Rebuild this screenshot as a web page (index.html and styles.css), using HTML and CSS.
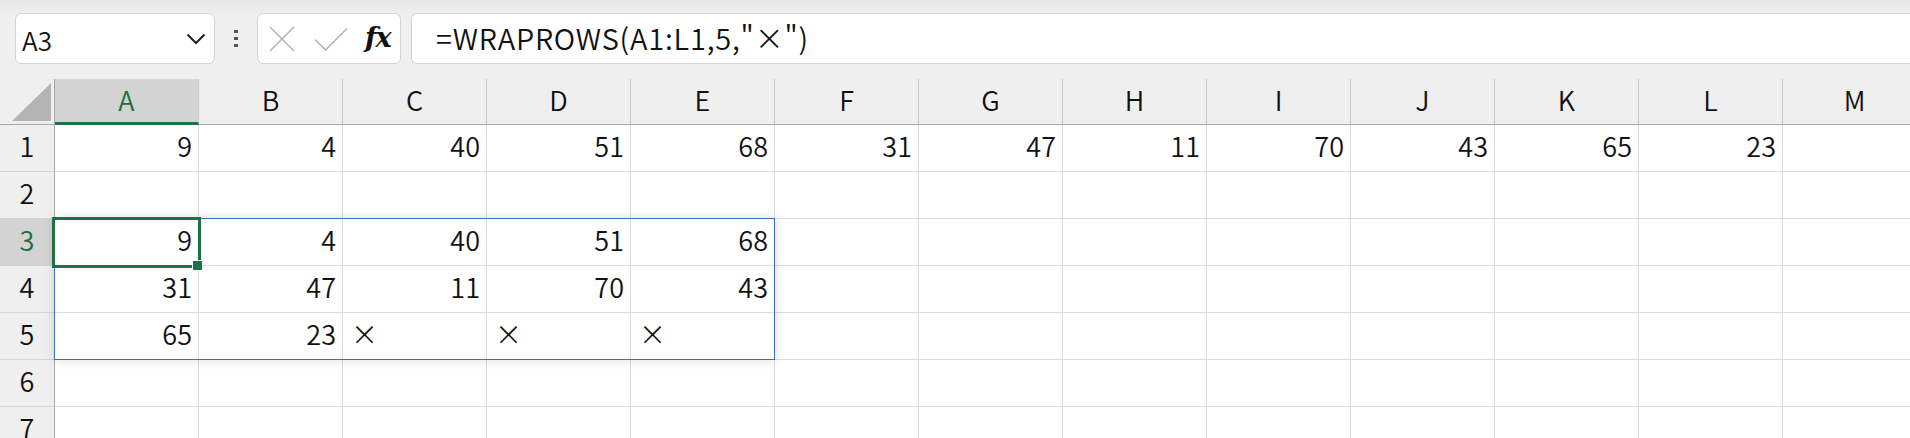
FILE: index.html
```html
<!DOCTYPE html>
<html lang="ja">
  <head>
    <meta charset="UTF-8" />
    <title>WRAPROWS</title>
    <link rel="stylesheet" href="styles.css">
  </head>
  <body>
    <div class="toolbar">
      <div class="namebox">
        <span>A3</span>
        <svg class="chevron" width="20" height="12" viewBox="0 0 20 12"><path d="M1.5 1.5 L10 10 L18.5 1.5" fill="none" stroke="#222" stroke-width="2"/></svg>
      </div>
      <div class="grip"><i></i><i></i><i></i></div>
      <div class="fxbox">
        <svg width="26" height="26" viewBox="0 0 26 26"><path d="M1 1 L25 25 M25 1 L1 25" stroke="#b4b4b4" stroke-width="1.6" fill="none"/></svg>
        <svg width="34" height="24" viewBox="0 0 34 24"><path d="M1 12.5 L11.5 23 L33 1.5" stroke="#b4b4b4" stroke-width="1.6" fill="none"/></svg>
        <span class="fx">fx</span>
      </div>
      <div class="formula">=WRAPROWS(A1:L1,5,"×")</div>
    </div>

    <div class="sheet">
      <div class="grid">
        <div class="corner"><span class="tri"></span></div>
        <div class="colhead selected">A</div>
        <div class="colhead">B</div>
        <div class="colhead">C</div>
        <div class="colhead">D</div>
        <div class="colhead">E</div>
        <div class="colhead">F</div>
        <div class="colhead">G</div>
        <div class="colhead">H</div>
        <div class="colhead">I</div>
        <div class="colhead">J</div>
        <div class="colhead">K</div>
        <div class="colhead">L</div>
        <div class="colhead">M</div>

        <div class="rowhead">1</div>
        <div class="cell num">9</div>
        <div class="cell num">4</div>
        <div class="cell num">40</div>
        <div class="cell num">51</div>
        <div class="cell num">68</div>
        <div class="cell num">31</div>
        <div class="cell num">47</div>
        <div class="cell num">11</div>
        <div class="cell num">70</div>
        <div class="cell num">43</div>
        <div class="cell num">65</div>
        <div class="cell num">23</div>
        <div class="cell"></div>

        <div class="rowhead">2</div>
        <div class="cell"></div><div class="cell"></div><div class="cell"></div><div class="cell"></div><div class="cell"></div><div class="cell"></div><div class="cell"></div><div class="cell"></div><div class="cell"></div><div class="cell"></div><div class="cell"></div><div class="cell"></div><div class="cell"></div>

        <div class="rowhead selected">3</div>
        <div class="cell num">9</div>
        <div class="cell num">4</div>
        <div class="cell num">40</div>
        <div class="cell num">51</div>
        <div class="cell num">68</div>
        <div class="cell"></div><div class="cell"></div><div class="cell"></div><div class="cell"></div><div class="cell"></div><div class="cell"></div><div class="cell"></div><div class="cell"></div>

        <div class="rowhead">4</div>
        <div class="cell num">31</div>
        <div class="cell num">47</div>
        <div class="cell num">11</div>
        <div class="cell num">70</div>
        <div class="cell num">43</div>
        <div class="cell"></div><div class="cell"></div><div class="cell"></div><div class="cell"></div><div class="cell"></div><div class="cell"></div><div class="cell"></div><div class="cell"></div>

        <div class="rowhead">5</div>
        <div class="cell num">65</div>
        <div class="cell num">23</div>
        <div class="cell">×</div>
        <div class="cell">×</div>
        <div class="cell">×</div>
        <div class="cell"></div><div class="cell"></div><div class="cell"></div><div class="cell"></div><div class="cell"></div><div class="cell"></div><div class="cell"></div><div class="cell"></div>

        <div class="rowhead">6</div>
        <div class="cell"></div><div class="cell"></div><div class="cell"></div><div class="cell"></div><div class="cell"></div><div class="cell"></div><div class="cell"></div><div class="cell"></div><div class="cell"></div><div class="cell"></div><div class="cell"></div><div class="cell"></div><div class="cell"></div>

        <div class="rowhead">7</div>
        <div class="cell"></div><div class="cell"></div><div class="cell"></div><div class="cell"></div><div class="cell"></div><div class="cell"></div><div class="cell"></div><div class="cell"></div><div class="cell"></div><div class="cell"></div><div class="cell"></div><div class="cell"></div><div class="cell"></div>
      </div>

      <div class="spill"></div>
      <div class="active"><span class="handle"></span></div>
    </div>
  </body>
</html>
```

FILE: styles.css
```css
body {
  margin: 0;
  width: 1910px;
  height: 438px;
  overflow: hidden;
  background: #efefef;
  font-family: "Noto Sans CJK JP", "Noto Sans", sans-serif;
  font-weight: 350;
  color: #111;
}
.toolbar {
  height: 79px;
  box-sizing: border-box;
  padding: 13px 0 15px 15px;
  display: flex;
  align-items: stretch;
  background: linear-gradient(#e6e6e6, #efefef 13px);
}
.namebox,
.fxbox,
.formula {
  background: #fff;
  border: 1px solid #d3d3d3;
  border-radius: 6px;
  box-sizing: border-box;
}
.namebox {
  width: 200px;
  display: flex;
  align-items: center;
  justify-content: space-between;
  padding: 0 8px 0 6px;
  font-size: 26px;
}
.namebox span {
  margin-top: 2px;
}
.grip {
  width: 42px;
  display: flex;
  flex-direction: column;
  align-items: center;
  justify-content: center;
  gap: 4px;
}
.grip i {
  width: 4px;
  height: 3px;
  background: #555;
}
.fxbox {
  width: 144px;
  display: flex;
  align-items: center;
  padding-left: 11px;
  gap: 19px;
}
.fx {
  font-family: "DejaVu Serif", serif;
  font-style: italic;
  font-weight: bold;
  font-size: 27px;
  letter-spacing: -1px;
  margin-left: -2px;
  margin-top: -3px;
}
.formula {
  flex: 1;
  margin-left: 10px;
  border-right: none;
  border-radius: 6px 0 0 6px;
  padding-left: 24px;
  font-size: 29px;
  line-height: 47px;
  letter-spacing: 0.8px;
}

.sheet {
  position: relative;
}
.grid {
  display: grid;
  grid-template-columns: 55px repeat(13, 144px);
  grid-template-rows: 46px repeat(7, 47px);
  background: #fff;
}
.grid > div {
  box-sizing: border-box;
  font-size: 27px;
}
.corner {
  background: #efefef;
  border-right: 1px solid #a9a9a9;
  border-bottom: 1px solid #a9a9a9;
  position: relative;
}
.tri {
  position: absolute;
  left: 12px;
  top: 4px;
  width: 39px;
  height: 38px;
  background: #b4b4b4;
  clip-path: polygon(100% 0, 100% 100%, 0 100%);
}
.colhead {
  background: #efefef;
  border-right: 1px solid #c6c6c6;
  border-bottom: 1px solid #a9a9a9;
  text-align: center;
  line-height: 42px;
}
.colhead.selected {
  background: #d3d3d3;
  color: #1e6e42;
  border-bottom: 3px solid #1e7145;
}
.rowhead {
  background: #efefef;
  border-right: 1px solid #a9a9a9;
  border-bottom: 1px solid #d3d3d3;
  text-align: center;
  line-height: 42px;
}
.rowhead.selected {
  background: #d3d3d3;
  color: #1e6e42;
}
.cell {
  border-right: 1px solid #dcdcdc;
  border-bottom: 1px solid #dcdcdc;
  padding: 0 6px 0 8px;
  line-height: 42px;
  white-space: nowrap;
}
.cell.num {
  text-align: right;
}

.spill {
  position: absolute;
  left: 54px;
  top: 139px;
  width: 721px;
  height: 142px;
  box-sizing: border-box;
  border: 1px solid #3c6ec8;
  box-shadow: 0 0 10px rgba(0, 0, 0, 0.14);
}
.active {
  position: absolute;
  left: 52px;
  top: 138px;
  width: 149px;
  height: 51px;
  box-sizing: border-box;
  border: 3px solid #1e7145;
}
.handle {
  position: absolute;
  right: -4px;
  bottom: -5px;
  width: 9px;
  height: 9px;
  background: #1e7145;
  outline: 1px solid #fff;
}
```
